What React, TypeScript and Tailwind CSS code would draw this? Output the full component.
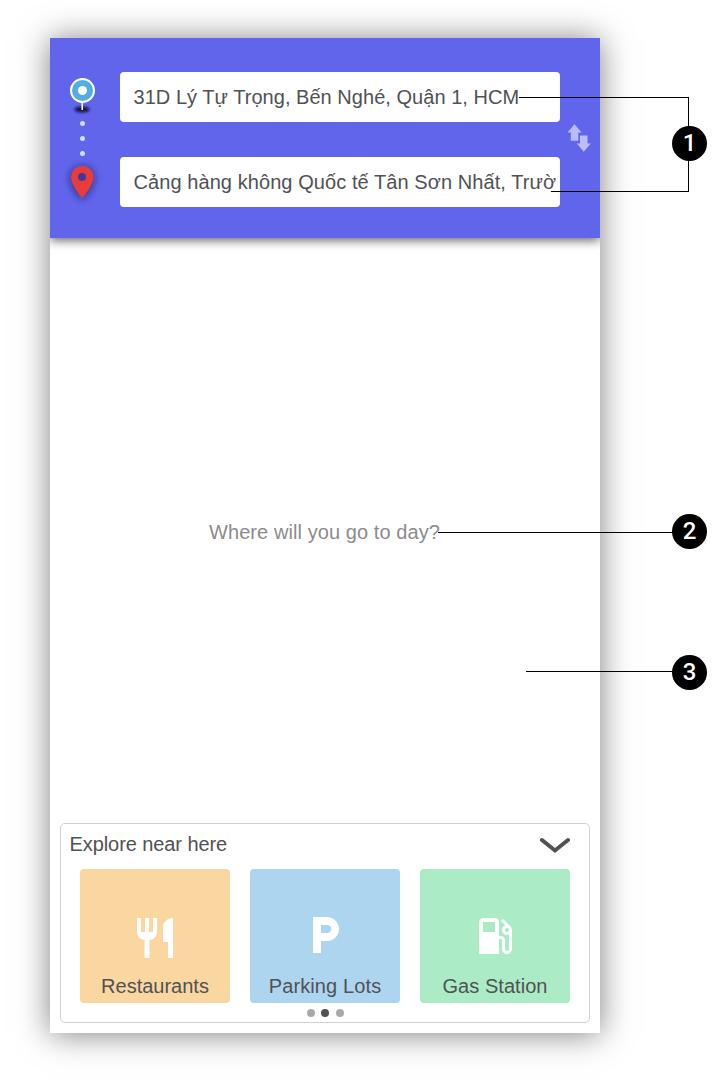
import type { ReactNode } from "react";

type PlaceProps = { label: string; color: string; spacing: string; icon: ReactNode };

function Place({ label, color, spacing, icon }: PlaceProps) {
  return (
    <button className={`flex h-[134px] w-[150px] flex-col items-center rounded ${color}`}>
      <span className="flex h-[105px] w-full justify-center">{icon}</span>
      <span className={`whitespace-nowrap text-[20px] leading-[24px] ${spacing}`}>{label}</span>
    </button>
  );
}

function Address({ text, spacing }: { text: string; spacing: string }) {
  return (
    <div className="flex h-[50px] w-[440px] items-center overflow-hidden rounded bg-white pl-[13.5px]">
      <span className={`whitespace-nowrap text-[20px] leading-[24px] ${spacing}`}>{text}</span>
    </div>
  );
}

function RouteMarkers() {
  return (
    <svg className="h-[200px] w-[70px] shrink-0" viewBox="50 38 70 200">
      <defs>
        <filter id="soft" x="-50%" y="-100%" width="200%" height="300%">
          <feGaussianBlur stdDeviation="1.7" />
        </filter>
        <filter id="glow" x="-60%" y="-60%" width="220%" height="220%">
          <feGaussianBlur stdDeviation="4" />
        </filter>
      </defs>
      <ellipse cx="82" cy="109.5" rx="7.5" ry="2.8" fill="#080833" filter="url(#soft)" />
      <path d="M82.2 101v9" stroke="#fff" strokeWidth="1.5" />
      <circle cx="82.5" cy="90.5" r="11.5" fill="#51aee0" stroke="#fff" strokeWidth="2" />
      <circle cx="82.5" cy="90.5" r="4.5" fill="#fff" />
      <g fill="#cce0ff">
        <circle cx="82.5" cy="123.5" r="2.5" />
        <circle cx="82.5" cy="138.5" r="2.5" />
        <circle cx="82.5" cy="153.5" r="2.5" />
      </g>
      <path d="M82 167c-6.3 0-11 5-11 11.200C71 186.500 82 199 82 199s11.500-12.500 11.500-20.800C93.500 172 88.500 167 82 167z" fill="#18183f" opacity=".8" filter="url(#glow)" />
      <path d="M82.200 166c-6.300 0-11.200 5-11.200 11.200C71 185.500 82.200 198 82.200 198s11.300-12.500 11.300-20.800C93.500 171 88.500 166 82.200 166z" fill="#e83c3c" />
      <circle cx="82" cy="177" r="4" fill="#43379c" />
    </svg>
  );
}

function Badge({ n, place }: { n: number; place: string }) {
  return (
    <span className={`absolute left-[672px] flex size-[35px] items-center justify-center rounded-full bg-black pb-[2px] font-['Roboto',sans-serif] text-[24px] font-medium leading-none text-white ${place}`}>
      {n}
    </span>
  );
}

export default function App() {
  return (
    <div className="relative h-[1082px] w-[714px] overflow-hidden bg-white px-[50px] pt-[38px] font-['Liberation_Sans',Arial,sans-serif] text-[#505254]">
      <main className="flex h-[995px] w-[550px] flex-col bg-white shadow-[0_1px_30px_rgba(0,0,0,0.5)]">
        <div className="h-[220px] shrink-0 overflow-hidden">
          <header className="flex h-[200px] bg-[#6065ec] shadow-[0_2px_10px_rgba(0,0,0,0.65)]">
            <RouteMarkers />
            <div className="flex flex-col gap-[35px] pt-[34px]">
              <Address text="31D Lý Tự Trọng, Bến Nghé, Quận 1, HCM" spacing="tracking-[0.035px]" />
              <Address text="Cảng hàng không Quốc tế Tân Sơn Nhất, Trườ" spacing="tracking-[0.075px]" />
            </div>
            <svg className="h-[200px] w-[40px] shrink-0" viewBox="560 38 40 200" fill="#bbbdfa">
              <path d="M574.500 124.300l7 8.200h-3.200v8.200h-7.500v-8.200h-3.300zM580 135.500h7.500v8h3.300l-7 8.300-7-8.300h3.200z" />
            </svg>
          </header>
        </div>

        <section className="flex grow items-center justify-center">
          <p className="relative -left-[0.5px] -top-[9px] whitespace-nowrap text-[20px] leading-[24px] tracking-[0.08px] text-[#8c8c8c]">Where will you go to day?</p>
        </section>

        <section className="mx-[10px] mb-[10px] flex h-[200px] shrink-0 flex-col rounded-[5px] border border-[#d0d1d3]">
          <div className="flex h-[45px] items-center justify-between pl-[8.5px] pr-[19px]">
            <h2 className="pb-[5px] text-[20px] leading-[24px] tracking-[-0.08px]">Explore near here</h2>
            <svg className="mb-[3px] h-[17px] w-[30px]" viewBox="0 0 30 17" fill="none" stroke="#505254" strokeWidth="4" strokeLinecap="round" strokeLinejoin="miter">
              <path d="M2 3l13 10.500L28 3" />
            </svg>
          </div>
          <div className="flex gap-[20px] pl-[19px]">
            <Place
              label="Restaurants"
              color="bg-[#fad6a1]"
              spacing="tracking-[0px]"
              icon={
                <svg className="mt-[45px] size-[48px]" viewBox="0 0 24 24" fill="#fff">
                  <path d="M11 9H9V2H7v7H5V2H3v7c0 2.120 1.660 3.840 3.750 3.970V22h2.500v-9.030C11.340 12.840 13 11.120 13 9V2h-2v7zm5-3v8h2.500v8H21V2c-2.760 0-5 2.240-5 4z" />
                </svg>
              }
            />
            <Place
              label="Parking Lots"
              color="bg-[#aed5f0]"
              spacing="tracking-[0.12px]"
              icon={
                <svg className="mt-[42px] size-[48px]" viewBox="0 0 24 24" fill="#fff">
                  <path d="M13 3H6v18h4v-6h3c3.310 0 6-2.690 6-6s-2.690-6-6-6zm.2 8H10V7h3.200c1.100 0 2 .9 2 2s-.9 2-2 2z" />
                </svg>
              }
            />
            <Place
              label="Gas Station"
              color="bg-[#abecc6]"
              spacing="tracking-[0.05px]"
              icon={
                <svg className="mt-[43px] size-[48px]" viewBox="0 0 24 24" fill="#fff">
                  <path d="M19.770 7.230l.01-.01-3.720-3.720L15 4.560l2.110 2.110c-.94.36-1.610 1.260-1.610 2.330 0 1.380 1.120 2.500 2.500 2.500.36 0 .69-.08 1-.21v7.210c0 .55-.45 1-1 1s-1-.45-1-1V14c0-1.100-.9-2-2-2h-1V5c0-1.100-.9-2-2-2H6c-1.100 0-2 .9-2 2v16h10v-7.500h1.500v5c0 1.380 1.120 2.500 2.500 2.500s2.500-1.120 2.500-2.500V9c0-.69-.28-1.320-.73-1.770zM12 10H6V5h6v5zm6 0c-.55 0-1-.45-1-1s.45-1 1-1 1 .45 1 1-.45 1-1 1z" />
                </svg>
              }
            />
          </div>
          <div className="flex justify-center gap-[6.5px] pt-[6px]">
            <span className="size-[8px] rounded-full bg-[#a9a9a9]" />
            <span className="size-[8px] rounded-full bg-[#505254]" />
            <span className="size-[8px] rounded-full bg-[#a9a9a9]" />
          </div>
        </section>
      </main>

      <span className="absolute left-[519px] top-[97px] h-px w-[170px] bg-black" />
      <span className="absolute left-[551px] top-[191px] h-px w-[138px] bg-black" />
      <span className="absolute left-[688px] top-[97px] h-[95px] w-px bg-black" />
      <span className="absolute left-[438px] top-[532px] h-px w-[240px] bg-black" />
      <span className="absolute left-[526px] top-[671px] h-px w-[150px] bg-black" />
      <Badge n={1} place="top-[126px]" />
      <Badge n={2} place="top-[514px]" />
      <Badge n={3} place="top-[655px]" />
    </div>
  );
}
